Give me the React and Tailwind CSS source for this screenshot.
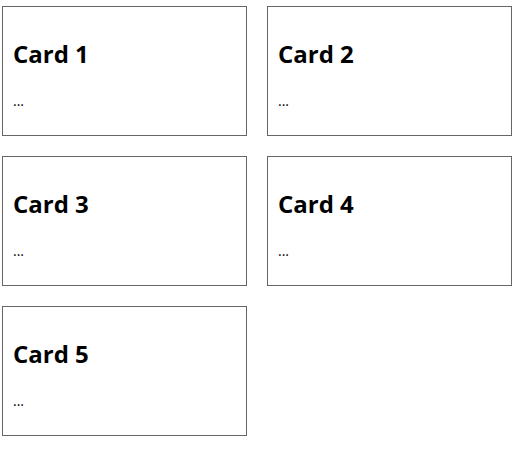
import React from "react";

const cards = [1, 2, 3, 4, 5];

export default function App() {
  return (
    <div className="min-h-screen bg-white pl-[2px] pt-[6px] font-['Open_Sans',sans-serif] text-black">
      <div className="grid grid-cols-[245px_245px] gap-x-5 gap-y-5">
        {cards.map((n) => (
          <div key={n} className="h-[130px] border border-[#666] px-[10px]">
            <h2 className="mt-[31px] text-2xl leading-8 font-bold">Card {n}</h2>
            <p className="mt-[21px] text-sm leading-5">...</p>
          </div>
        ))}
      </div>
    </div>
  );
}
